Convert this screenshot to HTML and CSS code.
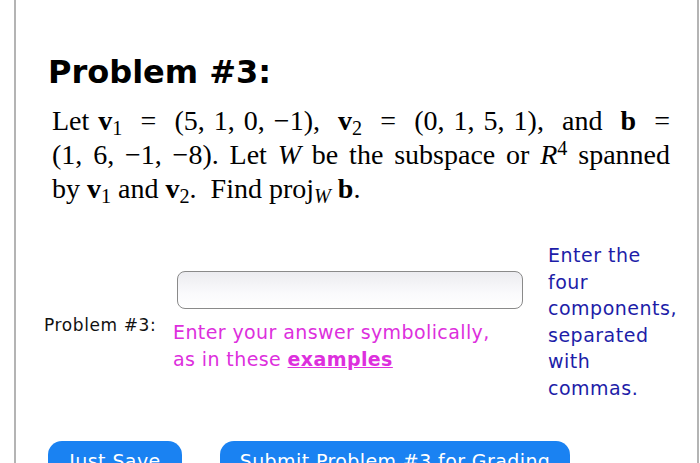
FILE: index.html
```html
<!DOCTYPE html>
<html>
<head>
<meta charset="utf-8">
<link rel="stylesheet" href="styles.css">
</head>
<body>
<div class="frame">
  <h1 class="title">Problem #3:</h1>
  <div class="prob">
    <div class="line">Let <b>v</b><sub>1</sub> &nbsp;=&nbsp; (5, 1, 0, −1), &nbsp;<b>v</b><sub>2</sub> &nbsp;=&nbsp; (0, 1, 5, 1), &nbsp;and &nbsp;<b>b</b> &nbsp;=</div>
    <div class="line">(1, 6, −1, −8). Let <i>W</i> be the subspace or <i>R</i><sup>4</sup> spanned</div>
    <div class="line last">by <b>v</b><sub>1</sub> and <b>v</b><sub>2</sub>. &nbsp;Find proj<sub><i>W</i></sub>&nbsp;<b>b</b>.</div>
  </div>
  <div class="answer">
    <div class="label">Problem #3:</div>
    <div class="mid">
      <div class="inputbox"></div>
      <div class="hint">Enter your answer symbolically,<br>as in these <a class="ex">examples</a></div>
    </div>
    <div class="note">Enter the<br>four<br>components,<br>separated<br>with<br>commas.</div>
  </div>
  <div class="buttons">
    <div class="btn save">Just Save</div>
    <div class="btn submit">Submit Problem #3 for Grading</div>
  </div>
</div>
</body>
</html>
```
FILE: styles.css
```css
html, body {
  margin: 0;
  padding: 0;
  background: #fff;
  overflow: hidden;
}
.frame {
  margin-left: 14px;
  width: 685px;
  height: 463px;
  border-left: 2px solid #b4b4b4;
  border-right: 2px solid #b4b4b4;
  box-sizing: border-box;
  padding-left: 32px;
  padding-top: 52px;
}
.title {
  margin: 0;
  font-family: "DejaVu Sans", Verdana, sans-serif;
  font-weight: bold;
  font-size: 32px;
  line-height: 40px;
  color: #000;
}
.prob {
  margin-top: 12px;
  margin-left: 4px;
  width: 618px;
  font-family: "Liberation Serif", "Times New Roman", serif;
  font-size: 28px;
  line-height: 34px;
  color: #000;
}
.line {
  text-align: justify;
  text-align-last: justify;
  white-space: nowrap;
}
.line.last {
  text-align-last: left;
}
.prob sub {
  font-size: 0.72em;
  vertical-align: -0.25em;
  line-height: 0;
}
.prob sup {
  font-size: 0.72em;
  vertical-align: 0.45em;
  line-height: 0;
}
.answer {
  margin-top: 36px;
  display: flex;
  align-items: center;
  margin-left: -4px;
}
.label {
  font-family: "DejaVu Sans", Verdana, sans-serif;
  font-size: 17px;
  letter-spacing: 0.6px;
  color: #111;
  width: 129px;
  padding-top: 6px;
}
.mid {
  width: 375px;
  display: flex;
  flex-direction: column;
}
.inputbox {
  margin-left: 4px;
  width: 346px;
  height: 38px;
  box-sizing: border-box;
  border: 1.5px solid #8a8a8a;
  border-radius: 8px;
  background: linear-gradient(#ececf0, #fafafc 60%, #ffffff);
}
.hint {
  margin-top: 10px;
  font-family: "DejaVu Sans", Verdana, sans-serif;
  font-size: 19px;
  letter-spacing: 0.4px;
  line-height: 27px;
  color: #dd2fdd;
}
.ex {
  font-weight: bold;
  text-decoration: underline;
  color: #dd2fdd;
}
.note {
  font-family: "DejaVu Sans", Verdana, sans-serif;
  font-size: 19px;
  letter-spacing: 0.5px;
  line-height: 26.5px;
  color: #1d1da8;
}
.buttons {
  margin-top: 40px;
  display: flex;
  gap: 38px;
}
.btn {
  background: #1a82f2;
  color: #fff;
  font-family: "DejaVu Sans", Verdana, sans-serif;
  font-size: 19px;
  letter-spacing: 0.4px;
  height: 36px;
  line-height: 36px;
  border-radius: 14px;
  text-align: center;
  padding-top: 2px;
}
.save { width: 134px; }
.submit { width: 350px; }
```
